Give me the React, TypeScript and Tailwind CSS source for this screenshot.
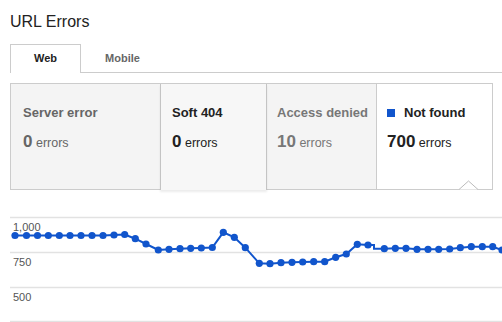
import React from "react";

// measured dot positions (page x, page y)
const points: [number, number][] = [
  [15, 235.5], [26.5, 235.5], [37.5, 235.5], [48.3, 235.5], [59.3, 235.5], [70, 235.5],
  [81, 235.5], [92, 235.5], [103, 235.5], [114, 235], [124.7, 234.5], [135.3, 238.7],
  [146, 244], [158.3, 250], [169, 249.3], [180, 248.7], [190.7, 248.3], [201.3, 248],
  [212.3, 247.5], [223.3, 232.3], [234.3, 237.3], [245.3, 247.7], [259.3, 263.3],
  [270, 263.7], [281, 262.7], [292, 262.3], [302.7, 262], [313.7, 261.7], [324.7, 261.7],
  [335.7, 257.3], [346.3, 254], [357.3, 244.3], [368, 245], [384.3, 248.7], [395.3, 248.3],
  [406, 248.3], [417, 249.3], [428, 249.3], [438.7, 249.3], [449.7, 249], [460.3, 247.7],
  [471.3, 246.7], [482.3, 246.7], [492.7, 246.7], [502, 250],
];

const TOP = 205;

const Chart = () => {
  const line = points
    .map(([x, y]) => {
      const p = `${x},${y - TOP}`;
      // small step before the segment at x=384
      if (x === 384.3) return `374,${245 - TOP} 374,${y - TOP} ${p}`;
      return p;
    })
    .join(" ");
  return (
    <svg width="502" height="117" className="block mt-[15px]">
      {[12.5, 47.5, 82.5, 116.5].map((y) => (
        <line key={y} x1="10" x2="502" y1={y} y2={y} stroke="#e2e2e2" strokeWidth="1.5" />
      ))}
      <text x="13" y="26" fontSize="11" fill="#555" fontFamily="Liberation Sans, Arial, sans-serif">1,000</text>
      <text x="13" y="61" fontSize="11" fill="#555" fontFamily="Liberation Sans, Arial, sans-serif">750</text>
      <text x="13" y="96" fontSize="11" fill="#555" fontFamily="Liberation Sans, Arial, sans-serif">500</text>
      <polyline points={line} fill="none" stroke="#1155cc" strokeWidth="2" />
      {points.map(([x, y]) => (
        <circle key={x} cx={x} cy={y - TOP} r="3.6" fill="#1155cc" />
      ))}
    </svg>
  );
};

interface CardProps {
  label: string;
  count: number;
  color: string;
  className: string;
  marker?: boolean;
}

const Card = ({ label, count, color, className, marker }: CardProps) => (
  <div className={`pt-[21px] ${className}`}>
    <div className={`flex items-center text-[13px] leading-[16px] font-bold ${color}`}>
      {marker && <span className="w-[8px] h-[8px] bg-[#1155cc] mr-[9px]" />}
      {label}
    </div>
    <div className={`mt-[10px] leading-[22px] ${color}`}>
      <span className="text-[17px] font-bold">{count}</span>
      <span className="text-[12.5px]"> errors</span>
    </div>
  </div>
);

export default function App() {
  return (
    <div className="w-[502px] h-[322px] overflow-hidden bg-white font-['Liberation_Sans',Arial,sans-serif]">
      <h1 className="pl-[10px] pt-[12px] text-[16px] leading-[20px] text-[#222]">URL Errors</h1>

      {/* Tabs */}
      <div className="mt-[12px] ml-[10px] flex h-[29px] border-b border-[#ccc]">
        <div className="h-[29px] -mb-px px-[23px] border border-b-0 border-[#ccc] bg-white text-[11px] font-bold leading-[27px] text-[#222]">
          Web
        </div>
        <div className="px-[24px] text-[11px] font-bold leading-[28px] text-[#666]">Mobile</div>
      </div>

      {/* Summary cards */}
      <div className="mt-[10px] ml-[10px] w-[483px] h-[107px] flex border border-[#ccc]">
        <Card label="Server error" count={0} color="text-[#666]" className="w-[149px] pl-[12px] bg-[#f4f4f4]" />
        <Card
          label="Soft 404"
          count={0}
          color="text-[#222]"
          className="relative z-10 w-[107px] pl-[11px] bg-[#f7f7f7] border-l border-r border-[#c4c4c4] h-[106px] shadow-[0_2px_2px_rgba(0,0,0,0.08)]"
        />
        <Card label="Access denied" count={10} color="text-[#777]" className="w-[109px] pl-[10px] bg-[#f4f4f4]" />
        <div className="relative flex-1 border-l border-[#ccc] bg-white">
          <Card label="Not found" count={700} color="text-[#222]" className="pl-[10px]" marker />
          <svg width="20" height="10" className="absolute left-[82px] bottom-[-1px]">
            <polyline points="0,9.5 9.5,1 19,9.5" fill="white" stroke="#bbb" strokeWidth="1" />
          </svg>
        </div>
      </div>

      <Chart />
    </div>
  );
}
